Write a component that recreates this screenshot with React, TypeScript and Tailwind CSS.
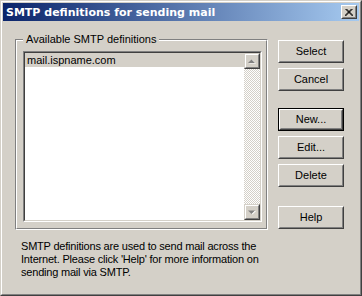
import React from "react";

const FONT = { fontFamily: '"Liberation Sans", Arial, sans-serif' };

function Btn({ label, isDefault }: { label: string; isDefault?: boolean }) {
  const inner = (
    <div className="border border-t-white border-l-white border-r-[#404040] border-b-[#404040] h-full">
      <div className="border border-t-[#d4d0c8] border-l-[#d4d0c8] border-r-[#808080] border-b-[#808080] h-full flex items-center justify-center text-[11px] text-black">
        {label}
      </div>
    </div>
  );
  return isDefault ? (
    <div className="w-[66px] h-[23px] border border-black">{inner}</div>
  ) : (
    <div className="w-[66px] h-[23px]">{inner}</div>
  );
}

function ScrollBtn({ dir }: { dir: "up" | "down" }) {
  return (
    <div className="w-[16px] h-[16px] bg-[#d4d0c8] border border-t-[#d4d0c8] border-l-[#d4d0c8] border-r-[#404040] border-b-[#404040]">
      <div className="h-full border border-t-white border-l-white border-r-[#808080] border-b-[#808080] flex items-center justify-center">
        <svg width="8" height="5" viewBox="0 0 8 5">
          {dir === "up" ? (
            <>
              <polygon points="4.5,1 8,4.5 1,4.5" fill="#fff" />
              <polygon points="3.5,0.5 7,4 0,4" fill="#808080" />
            </>
          ) : (
            <>
              <polygon points="1,1 8,1 4.5,4.5" fill="#fff" />
              <polygon points="0,0.5 7,0.5 3.5,4" fill="#808080" />
            </>
          )}
        </svg>
      </div>
    </div>
  );
}

export default function App() {
  return (
    <div className="w-[362px] h-[296px] bg-[#d4d0c8]" style={FONT}>
      <div className="h-full border border-t-[#d4d0c8] border-l-[#d4d0c8] border-r-[#404040] border-b-[#404040]">
        <div className="h-full border border-t-white border-l-white border-r-[#808080] border-b-[#808080] p-[1px] flex flex-col">
          {/* title bar */}
          <div className="h-[18px] flex items-center justify-between pl-[3px] pr-[2px] bg-[linear-gradient(90deg,#0a246a,#a6caf0)]">
            <span className="text-white font-bold text-[11px] leading-none font-['DejaVu_Sans',sans-serif]">
              SMTP definitions for sending mail
            </span>
            <div className="w-[16px] h-[14px] border border-t-white border-l-white border-r-[#404040] border-b-[#404040] bg-[#d4d0c8]">
              <div className="h-full border border-t-[#d4d0c8] border-l-[#d4d0c8] border-r-[#808080] border-b-[#808080] flex items-center justify-center">
                <svg width="8" height="7" viewBox="0 0 8 7">
                  <path d="M0.5 0 L7.5 7 M1.5 0 L8.5 7 M7.5 0 L0.5 7 M6.5 0 L-0.5 7" stroke="#000" strokeWidth="1" />
                </svg>
              </div>
            </div>
          </div>

          {/* body */}
          <div className="flex pl-[12px] pt-[18px]">
            <div className="flex flex-col">
              <div className="relative w-[253px] h-[191px] border border-t-[#808080] border-l-[#808080] border-r-white border-b-white">
                <div className="h-full border border-t-white border-l-white border-r-[#808080] border-b-[#808080] pl-[6px] pr-[4px] pt-[10px] pb-[6px]">
                  <div className="h-full border border-t-[#808080] border-l-[#808080] border-r-white border-b-white">
                    <div className="h-full border border-t-[#404040] border-l-[#404040] border-r-[#d4d0c8] border-b-[#d4d0c8] bg-white flex">
                      <div className="flex-1">
                        <div className="h-[14px] bg-[#d4d0c8] pl-[2px] text-[11px] leading-[14px] text-black">mail.ispname.com</div>
                      </div>
                      <div className="w-[16px] flex flex-col">
                        <ScrollBtn dir="up" />
                        <div className="flex-1 bg-[repeating-conic-gradient(#d4d0c8_0_25%,#fff_0_50%)] bg-[length:2px_2px]" />
                        <ScrollBtn dir="down" />
                      </div>
                    </div>
                  </div>
                </div>
                <span className="absolute left-[7px] top-[-7px] bg-[#d4d0c8] px-[3px] text-[11px] leading-[13px] text-black">
                  Available SMTP definitions
                </span>
              </div>
              <p className="ml-[6px] mt-[10px] text-[11px] leading-[13px] text-black whitespace-nowrap tracking-[-0.2px]">
                SMTP definitions are used to send mail across the
                <br />
                Internet. Please click 'Help' for more information on
                <br />
                sending mail via SMTP.
              </p>
            </div>
            <div className="ml-[10px] mt-[1px] flex flex-col">
              <Btn label="Select" />
              <div className="mt-[5px]"><Btn label="Cancel" /></div>
              <div className="mt-[17px]"><Btn label="New..." isDefault /></div>
              <div className="mt-[5px]"><Btn label="Edit..." /></div>
              <div className="mt-[5px]"><Btn label="Delete" /></div>
              <div className="mt-[19px]"><Btn label="Help" /></div>
            </div>
          </div>
        </div>
      </div>
    </div>
  );
}
